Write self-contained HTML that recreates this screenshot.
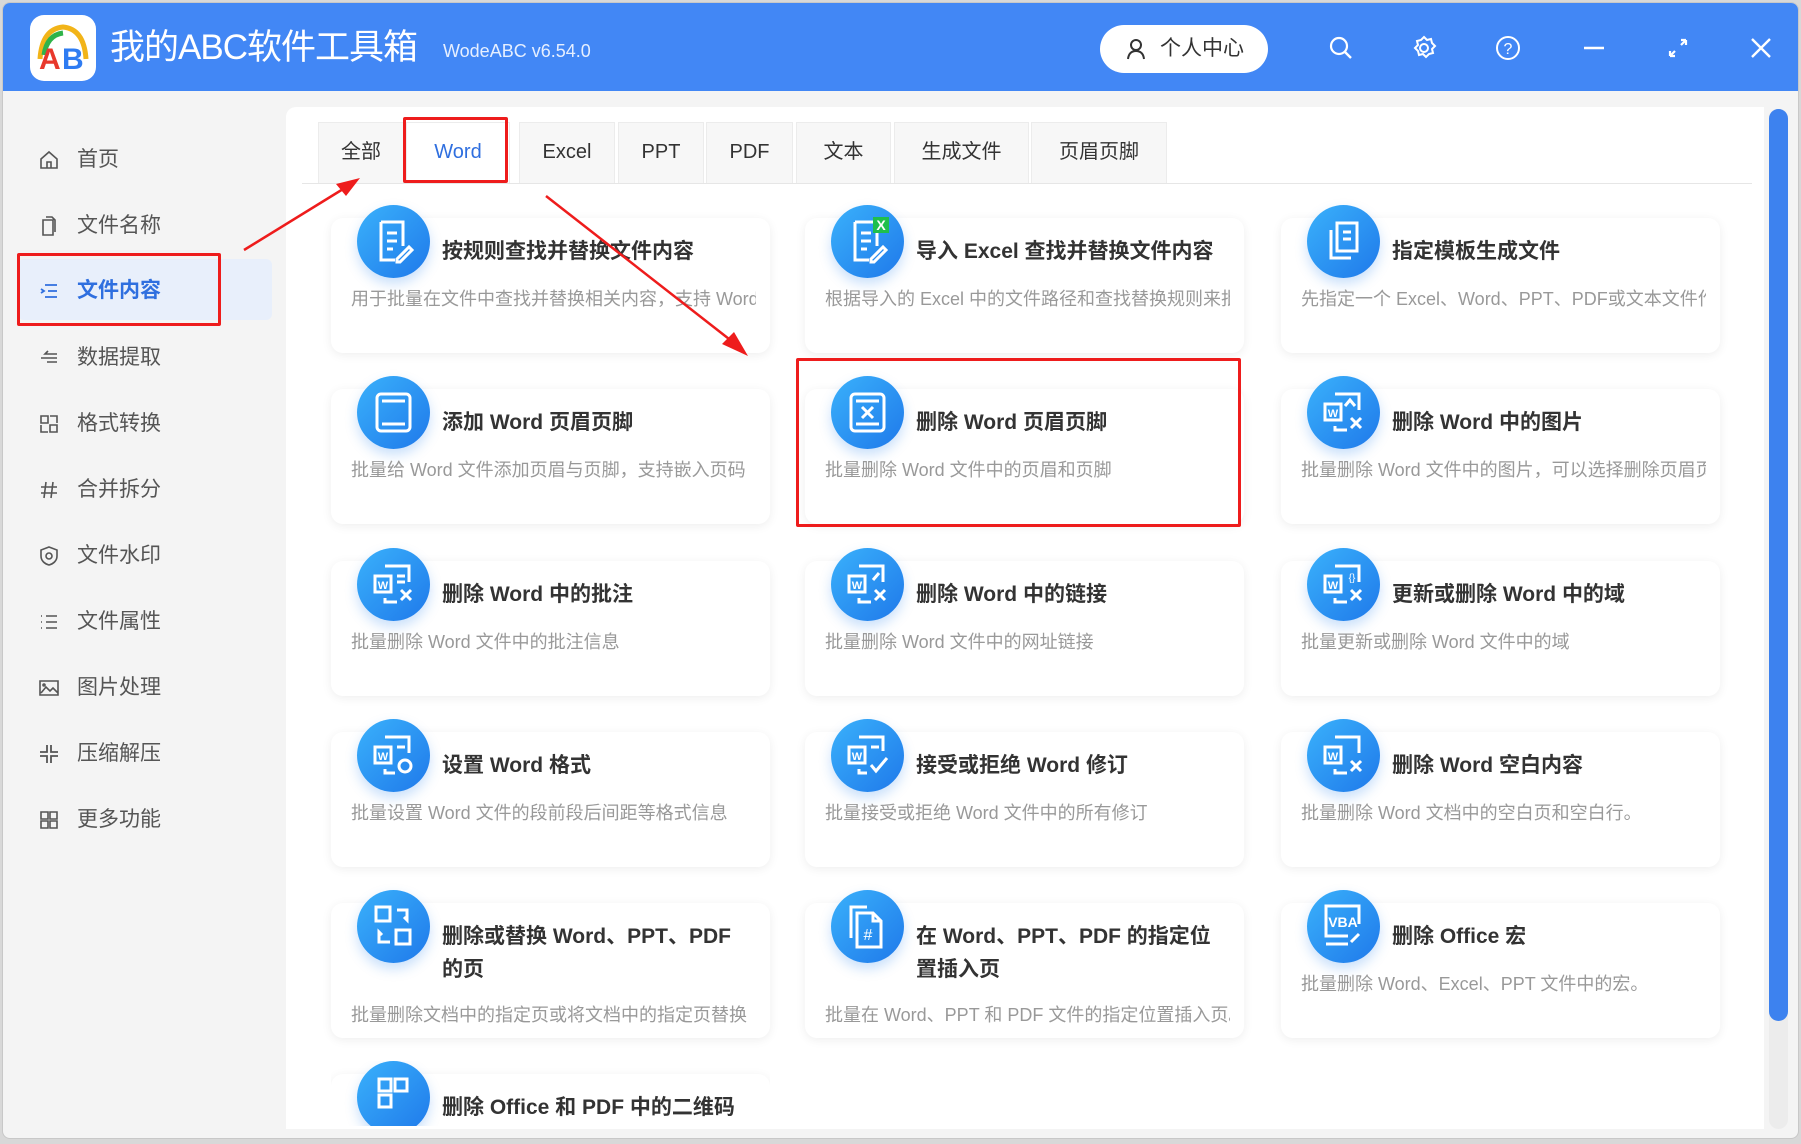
<!DOCTYPE html>
<html><head><meta charset="utf-8">
<style>
*{margin:0;padding:0;box-sizing:border-box}
html,body{width:1801px;height:1144px;overflow:hidden}
body{background:#d8d8d8;font-family:"Liberation Sans","Noto Sans CJK SC",sans-serif;position:relative}
.win{position:absolute;left:2px;top:2px;width:1797px;height:1137px;background:#f4f4f4;border-radius:8px;overflow:hidden;border:1px solid #c8c8c8}
.hdr{position:absolute;left:0;top:0;width:100%;height:88px;background:#4287f5}
.logo{position:absolute;left:27px;top:12px;width:66px;height:66px;background:#fff;border-radius:14px}
.title{position:absolute;left:107px;top:23px;color:#fff;font-size:35px;line-height:44px;letter-spacing:-1px}
.ver{position:absolute;left:440px;top:38px;color:#e6efff;font-size:18px}
.user{position:absolute;left:1097px;top:22px;width:168px;height:48px;background:#fff;border-radius:24px;font-size:21px;color:#333;line-height:48px;padding-left:60px}
.hi{position:absolute;top:32px}
.side{position:absolute;left:0;top:88px;width:283px;height:1040px}
.si{position:absolute;left:36px;font-size:21px;color:#555;height:30px;line-height:30px;width:240px}
.si svg{position:absolute;left:0;top:5px}
.si span{position:absolute;left:38px}
.act{position:absolute;left:15px;top:168px;width:254px;height:61px;background:#e8effb;border-radius:6px}
.panel{position:absolute;left:283px;top:104px;width:1478px;height:1022px;background:#fff;border-radius:10px 0 0 0}
.tab{position:absolute;top:15px;height:61px;background:#f7f7f7;border:1px solid #ececec;border-bottom:none;font-size:20px;color:#333;text-align:center;line-height:58px}
.tabline{position:absolute;left:16px;top:76px;width:1450px;height:1px;background:#e6e6e6}
.card{position:absolute;width:439px;height:135px;background:#fff;border-radius:12px;box-shadow:0 2px 10px rgba(0,0,0,.07)}
.ic{position:absolute;left:26px;top:-13px;width:73px;height:73px;border-radius:50%;background:linear-gradient(135deg,#3ab1fb,#1f79ea);box-shadow:0 6px 12px rgba(40,130,240,.25)}
.ic svg{position:absolute;left:0;top:0}
.ct{position:absolute;left:111px;top:17px;font-size:21px;font-weight:bold;color:#333;line-height:33px;width:310px}
.cd{position:absolute;left:20px;top:67px;font-size:18px;color:#999;white-space:nowrap;overflow:hidden;width:405px}
.red{position:absolute;border:3px solid #ee1c1c;border-radius:2px}
.sb{position:absolute;left:1766px;top:106px;width:19px;height:1020px;background:#ececec;border-radius:10px}
.sbt{position:absolute;left:0;top:0;width:19px;height:912px;background:#3d82ef;border-radius:10px}
</style></head><body>
<div class="win">
<div class="hdr">
 <div class="logo"><svg width="66" height="66" viewBox="0 0 66 66"><path d="M10 44 Q12 14 33 12 Q54 14 56 44" fill="none" stroke="#f2b418" stroke-width="5"/><path d="M14 40 Q17 20 33 18" fill="none" stroke="#2fb34a" stroke-width="5"/><text x="9" y="54" font-size="30" font-weight="bold" fill="#e8382c" font-family="Liberation Sans">A</text><text x="32" y="54" font-size="30" font-weight="bold" fill="#2e7cf2" font-family="Liberation Sans">B</text></svg></div>
 <div class="title">我的ABC软件工具箱</div>
 <div class="ver">WodeABC v6.54.0</div>
 <div class="user"><svg style="position:absolute;left:26px;top:13px" width="20" height="22" viewBox="0 0 20 22"><circle cx="10" cy="7" r="5" fill="none" stroke="#333" stroke-width="2"/><path d="M2 21 Q3 13 10 13 Q17 13 18 21" fill="none" stroke="#333" stroke-width="2"/></svg>个人中心</div>
 <svg class="hi" style="left:1325px" width="26" height="26" viewBox="0 0 26 26"><circle cx="11" cy="11" r="8" fill="none" stroke="#fff" stroke-width="2.2"/><path d="M17 17l6 6" stroke="#fff" stroke-width="2.4"/></svg>
 <svg class="hi" style="left:1408px" width="26" height="26" viewBox="0 0 26 26"><circle cx="13" cy="13" r="4" fill="none" stroke="#fff" stroke-width="2"/><path d="M13 2l3 3 4-1 1 4 3 3-3 3 1 4-4 1-3 3-3-3-4 1-1-4-3-3 3-3-1-4 4-1z" fill="none" stroke="#fff" stroke-width="2"/></svg>
 <svg class="hi" style="left:1492px" width="26" height="26" viewBox="0 0 26 26"><circle cx="13" cy="13" r="11" fill="none" stroke="#fff" stroke-width="2"/><text x="13" y="19" font-size="16" fill="#fff" text-anchor="middle" font-family="Liberation Sans">?</text></svg>
 <svg class="hi" style="left:1578px" width="26" height="26" viewBox="0 0 26 26"><path d="M3 13h20" stroke="#fff" stroke-width="2.4"/></svg>
 <svg class="hi" style="left:1662px" width="26" height="26" viewBox="0 0 26 26"><path d="M5 21l5-5M21 5l-5 5M5 21v-5M5 21h5M21 5h-5M21 5v5" stroke="#fff" stroke-width="2.2" fill="none"/></svg>
 <svg class="hi" style="left:1745px" width="26" height="26" viewBox="0 0 26 26"><path d="M4 4l18 18M22 4L4 22" stroke="#fff" stroke-width="2.4"/></svg>
</div>
<div class="side">
 <div class="act"></div>
 <div class="si" style="top:54px"><svg width="20" height="20" viewBox="0 0 20 20" fill="none" stroke="#555" stroke-width="1.6"><path d="M2 9L10 2l8 7v9H2z M8 18v-6h4v6"/></svg><span>首页</span></div>
 <div class="si" style="top:120px"><svg width="20" height="20" viewBox="0 0 20 20" fill="none" stroke="#555" stroke-width="1.6"><path d="M4 4h10v15H4z M7 1h6l3 3v12"/></svg><span>文件名称</span></div>
 <div class="si" style="top:185px;color:#2f6fdf;font-weight:bold"><svg width="20" height="20" viewBox="0 0 20 20" fill="none" stroke="#2f6fdf" stroke-width="1.8"><path d="M6 4h12M9 10h9M6 16h12M2 8l3 2-3 2"/></svg><span>文件内容</span></div>
 <div class="si" style="top:252px"><svg width="20" height="20" viewBox="0 0 20 20" fill="none" stroke="#555" stroke-width="1.6"><path d="M18 6H6l3-3M2 10h16M18 14H8"/></svg><span>数据提取</span></div>
 <div class="si" style="top:318px"><svg width="20" height="20" viewBox="0 0 20 20" fill="none" stroke="#555" stroke-width="1.6"><path d="M2 2h7v7H2zM11 11h7v7h-7zM11 2h7v7M2 11v7h7"/></svg><span>格式转换</span></div>
 <div class="si" style="top:384px"><svg width="20" height="20" viewBox="0 0 20 20" fill="none" stroke="#555" stroke-width="1.6"><path d="M7 2L5 18M14 2l-2 16M2 7h16M2 13h16"/></svg><span>合并拆分</span></div>
 <div class="si" style="top:450px"><svg width="20" height="20" viewBox="0 0 20 20" fill="none" stroke="#555" stroke-width="1.6"><path d="M10 1l8 3v6c0 5-4 8-8 9-4-1-8-4-8-9V4z"/><circle cx="10" cy="10" r="3"/></svg><span>文件水印</span></div>
 <div class="si" style="top:516px"><svg width="20" height="20" viewBox="0 0 20 20" fill="none" stroke="#555" stroke-width="1.6"><path d="M2 4h1M2 10h1M2 16h1M7 4h11M7 10h11M7 16h11"/></svg><span>文件属性</span></div>
 <div class="si" style="top:582px"><svg width="20" height="20" viewBox="0 0 20 20" fill="none" stroke="#555" stroke-width="1.6"><path d="M1 3h18v14H1zM2 15l5-6 4 4 3-3 5 5"/><circle cx="5" cy="7" r="1"/></svg><span>图片处理</span></div>
 <div class="si" style="top:648px"><svg width="20" height="20" viewBox="0 0 20 20" fill="none" stroke="#555" stroke-width="1.8"><path d="M8 1v7H1M12 1v7h7M8 19v-7H1M12 19v-7h7"/></svg><span>压缩解压</span></div>
 <div class="si" style="top:714px"><svg width="20" height="20" viewBox="0 0 20 20" fill="none" stroke="#555" stroke-width="1.6"><path d="M2 2h7v7H2zM11 2h7v7h-7zM2 11h7v7H2zM11 11h7v7h-7z"/></svg><span>更多功能</span></div>
</div>
<div class="panel">
 <div class="tab" style="left:32px;width:86px">全部</div>
 <div class="tab" style="left:120px;width:104px;background:#fff;color:#2f6fdf">Word</div>
 <div class="tab" style="left:233px;width:96px">Excel</div>
 <div class="tab" style="left:332px;width:86px">PPT</div>
 <div class="tab" style="left:420px;width:87px">PDF</div>
 <div class="tab" style="left:510px;width:95px">文本</div>
 <div class="tab" style="left:608px;width:135px">生成文件</div>
 <div class="tab" style="left:745px;width:136px">页眉页脚</div>
 <div class="tabline"></div>
</div>
<div class="sb"><div class="sbt"></div></div>
</div>

<div class="card" style="left:331px;top:218px"><div class="ic"><svg width="73" height="73" viewBox="0 0 73 73" fill="none" stroke="#fff" stroke-width="3"><path d="M24 17h22v24M24 17v38h14M30 28h10M30 36h10M30 44h6M40 54l12-12 3 3-12 12h-3z"/></svg></div><div class="ct">按规则查找并替换文件内容</div><div class="cd">用于批量在文件中查找并替换相关内容，支持 Word、Excel</div></div>
<div class="card" style="left:805px;top:218px"><div class="ic"><svg width="73" height="73" viewBox="0 0 73 73" fill="none" stroke="#fff" stroke-width="3"><path d="M24 17h22v24M24 17v38h14M30 28h10M30 36h10M30 44h6M40 54l12-12 3 3-12 12h-3z"/><rect x="42" y="12" width="16" height="16" fill="#1fbf4c" stroke="none"/><text x="50" y="25" font-size="14" font-weight="bold" fill="#fff" stroke="none" text-anchor="middle" font-family="Liberation Sans">X</text></svg></div><div class="ct">导入 Excel 查找并替换文件内容</div><div class="cd">根据导入的 Excel 中的文件路径和查找替换规则来批量</div></div>
<div class="card" style="left:1281px;top:218px"><div class="ic"><svg width="73" height="73" viewBox="0 0 73 73" fill="none" stroke="#fff" stroke-width="3"><path d="M30 18h20v28H30zM24 25v28h20M36 27h8M36 34h8"/></svg></div><div class="ct">指定模板生成文件</div><div class="cd">先指定一个 Excel、Word、PPT、PDF或文本文件作为模板</div></div>

<div class="card" style="left:331px;top:389px"><div class="ic"><svg width="73" height="73" viewBox="0 0 73 73" fill="none" stroke="#fff" stroke-width="3"><rect x="20" y="18" width="33" height="37" rx="4"/><path d="M25 25h23M25 48h23"/></svg></div><div class="ct">添加 Word 页眉页脚</div><div class="cd">批量给 Word 文件添加页眉与页脚，支持嵌入页码</div></div>
<div class="card" style="left:805px;top:389px"><div class="ic"><svg width="73" height="73" viewBox="0 0 73 73" fill="none" stroke="#fff" stroke-width="3"><rect x="20" y="18" width="33" height="37" rx="4"/><path d="M25 25h23M25 48h23M31 31l11 11M42 31L31 42"/></svg></div><div class="ct">删除 Word 页眉页脚</div><div class="cd">批量删除 Word 文件中的页眉和页脚</div></div>
<div class="card" style="left:1281px;top:389px"><div class="ic"><svg width="73" height="73" viewBox="0 0 73 73" fill="none" stroke="#fff" stroke-width="3"><path d="M28 18h24v16M28 50v4h12M44 42l10 10M54 42L44 52"/><rect x="18" y="28" width="16" height="16"/><text x="26" y="41" font-size="11" font-weight="bold" fill="#fff" stroke="none" text-anchor="middle" font-family="Liberation Sans">W</text><path d="M38 30l5-6 5 6" /></svg></div><div class="ct">删除 Word 中的图片</div><div class="cd">批量删除 Word 文件中的图片，可以选择删除页眉页脚</div></div>

<div class="card" style="left:331px;top:561px"><div class="ic"><svg width="73" height="73" viewBox="0 0 73 73" fill="none" stroke="#fff" stroke-width="3"><path d="M28 18h24v16M28 50v4h12M44 42l10 10M54 42L44 52M40 28h8M40 34h8"/><rect x="18" y="28" width="16" height="16"/><text x="26" y="41" font-size="11" font-weight="bold" fill="#fff" stroke="none" text-anchor="middle" font-family="Liberation Sans">W</text></svg></div><div class="ct">删除 Word 中的批注</div><div class="cd">批量删除 Word 文件中的批注信息</div></div>
<div class="card" style="left:805px;top:561px"><div class="ic"><svg width="73" height="73" viewBox="0 0 73 73" fill="none" stroke="#fff" stroke-width="3"><path d="M28 18h24v16M28 50v4h12M44 42l10 10M54 42L44 52M42 32l6-7"/><rect x="18" y="28" width="16" height="16"/><text x="26" y="41" font-size="11" font-weight="bold" fill="#fff" stroke="none" text-anchor="middle" font-family="Liberation Sans">W</text></svg></div><div class="ct">删除 Word 中的链接</div><div class="cd">批量删除 Word 文件中的网址链接</div></div>
<div class="card" style="left:1281px;top:561px"><div class="ic"><svg width="73" height="73" viewBox="0 0 73 73" fill="none" stroke="#fff" stroke-width="3"><path d="M28 18h24v16M28 50v4h12M44 42l10 10M54 42L44 52"/><rect x="18" y="28" width="16" height="16"/><text x="26" y="41" font-size="11" font-weight="bold" fill="#fff" stroke="none" text-anchor="middle" font-family="Liberation Sans">W</text><text x="45" y="33" font-size="10" fill="#fff" stroke="none" text-anchor="middle" font-family="Liberation Sans">{}</text></svg></div><div class="ct">更新或删除 Word 中的域</div><div class="cd">批量更新或删除 Word 文件中的域</div></div>

<div class="card" style="left:331px;top:732px"><div class="ic"><svg width="73" height="73" viewBox="0 0 73 73" fill="none" stroke="#fff" stroke-width="3"><path d="M28 18h24v16M28 50v4h10M40 28h8"/><rect x="18" y="28" width="16" height="16"/><text x="26" y="41" font-size="11" font-weight="bold" fill="#fff" stroke="none" text-anchor="middle" font-family="Liberation Sans">W</text><circle cx="48" cy="47" r="6"/></svg></div><div class="ct">设置 Word 格式</div><div class="cd">批量设置 Word 文件的段前段后间距等格式信息</div></div>
<div class="card" style="left:805px;top:732px"><div class="ic"><svg width="73" height="73" viewBox="0 0 73 73" fill="none" stroke="#fff" stroke-width="3"><path d="M28 18h24v14M28 50v4h8M40 28h8M40 46l5 6 11-13"/><rect x="18" y="28" width="16" height="16"/><text x="26" y="41" font-size="11" font-weight="bold" fill="#fff" stroke="none" text-anchor="middle" font-family="Liberation Sans">W</text></svg></div><div class="ct">接受或拒绝 Word 修订</div><div class="cd">批量接受或拒绝 Word 文件中的所有修订</div></div>
<div class="card" style="left:1281px;top:732px"><div class="ic"><svg width="73" height="73" viewBox="0 0 73 73" fill="none" stroke="#fff" stroke-width="3"><path d="M28 18h24v16M28 50v4h12M44 42l10 10M54 42L44 52"/><rect x="18" y="28" width="16" height="16"/><text x="26" y="41" font-size="11" font-weight="bold" fill="#fff" stroke="none" text-anchor="middle" font-family="Liberation Sans">W</text></svg></div><div class="ct">删除 Word 空白内容</div><div class="cd">批量删除 Word 文档中的空白页和空白行。</div></div>

<div class="card" style="left:331px;top:903px"><div class="ic"><svg width="73" height="73" viewBox="0 0 73 73" fill="none" stroke="#fff" stroke-width="3"><rect x="19" y="17" width="14" height="14"/><rect x="39" y="40" width="14" height="14"/><path d="M40 20h10v10l-3-3M33 52H22V42l3 3"/></svg></div><div class="ct">删除或替换 Word、PPT、PDF 的页</div><div class="cd" style="top:98px">批量删除文档中的指定页或将文档中的指定页替换</div></div>
<div class="card" style="left:805px;top:903px"><div class="ic"><svg width="73" height="73" viewBox="0 0 73 73" fill="none" stroke="#fff" stroke-width="3"><path d="M20 48V17h16M26 23h16l8 8v26H26zM42 23v8h8"/><text x="37" y="50" font-size="16" fill="#fff" stroke="none" text-anchor="middle" font-family="Liberation Sans">#</text></svg></div><div class="ct">在 Word、PPT、PDF 的指定位置插入页</div><div class="cd" style="top:98px">批量在 Word、PPT 和 PDF 文件的指定位置插入页。</div></div>
<div class="card" style="left:1281px;top:903px"><div class="ic"><svg width="73" height="73" viewBox="0 0 73 73" fill="none" stroke="#fff" stroke-width="3"><path d="M52 34V16H19v30h22M19 54h22M44 52l8-8"/><text x="36" y="37" font-size="14" font-weight="bold" fill="#fff" stroke="none" text-anchor="middle" font-family="Liberation Sans">VBA</text></svg></div><div class="ct">删除 Office 宏</div><div class="cd">批量删除 Word、Excel、PPT 文件中的宏。</div></div>

<div style="position:absolute;left:331px;top:1061px;width:439px;height:65px;overflow:hidden"><div class="card" style="left:0;top:13px"><div class="ic"><svg width="73" height="73" viewBox="0 0 73 73" fill="none" stroke="#fff" stroke-width="3"><rect x="22" y="18" width="12" height="12"/><rect x="38" y="18" width="12" height="12"/><rect x="22" y="34" width="12" height="12"/></svg></div><div class="ct">删除 Office 和 PDF 中的二维码</div></div></div>

<div class="red" style="left:17px;top:253px;width:204px;height:73px"></div>
<div class="red" style="left:403px;top:117px;width:105px;height:66px"></div>
<div class="red" style="left:796px;top:358px;width:445px;height:169px"></div>
<svg style="position:absolute;left:0;top:0" width="1801" height="1144">
 <path d="M244 250L348 186" stroke="#ee1c1c" stroke-width="2.5"/>
 <path d="M360 178L336 184L346 196z" fill="#ee1c1c"/>
 <path d="M546 196L738 346" stroke="#ee1c1c" stroke-width="2.5"/>
 <path d="M748 356L722 344L734 332z" fill="#ee1c1c"/>
</svg>
</body></html>
